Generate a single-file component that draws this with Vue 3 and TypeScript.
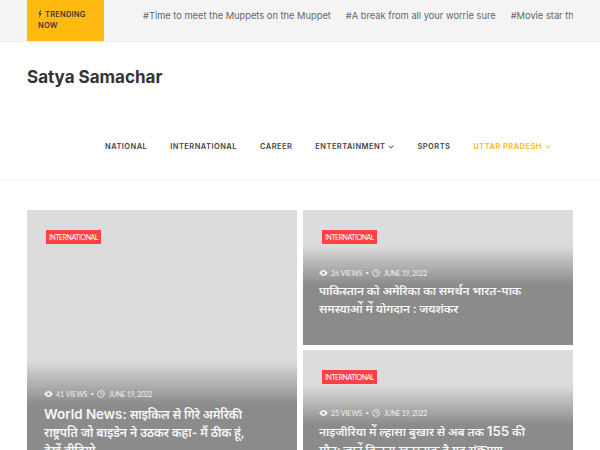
<script setup lang="ts">
interface Card { views: number; title: string }
const nav = [
  { label: 'NATIONAL' },
  { label: 'INTERNATIONAL' },
  { label: 'CAREER' },
  { label: 'ENTERTAINMENT', caret: true },
  { label: 'SPORTS' },
  { label: 'UTTAR PRADESH', caret: true, active: true },
]
const ticker = ['#Time to meet the Muppets on the Muppet', '#A break from all your worrie sure', '#Movie star the']
const main: Card = { views: 41, title: 'World News: साइकिल से गिरे अमेरिकी राष्ट्रपति जो बाइडेन ने उठकर कहा- मैं ठीक हूं, देखें वीडियो' }
const side: Card[] = [
  { views: 26, title: 'पाकिस्तान को अमेरिका का समर्थन भारत-पाक समस्याओं में योगदान : जयशंकर' },
  { views: 25, title: 'नाइजीरिया में ल्हासा बुखार से अब तक 155 की मौत; जानें कितना खतरनाक है यह संक्रमण' },
]
const parts = (title: string): string[] => title.split(/(World News:|155)/)
</script>

<template>
  <div class="page">
    <div class="topbar">
      <div class="trend">
        <svg class="bolt" width="4" height="8" viewBox="0 0 6 9" preserveAspectRatio="none"><path d="M3.600 0 .6 4.900h1.900L1.800 9 5.400 3.500H3.300L4.600 0z" fill="#3a3a3a"/></svg>
        TRENDING<br />NOW
      </div>
      <div class="ticker">
        <span v-for="t in ticker" :key="t">{{ t }}</span>
      </div>
    </div>

    <header class="brand">
      <h1>Satya Samachar</h1>
    </header>

    <nav class="nav">
      <a v-for="n in nav" :key="n.label" :class="{ active: n.active }">
        {{ n.label }}
        <svg v-if="n.caret" width="6" height="4" viewBox="0 0 6 4"><path d="M.6.7 3 3.100 5.400.7" fill="none" stroke="currentColor" stroke-width="1"/></svg>
      </a>
    </nav>

    <section class="grid">
      <article class="card big">
        <span class="tag">INTERNATIONAL</span>
        <div class="body">
          <div class="meta">
            <svg width="9" height="6" viewBox="0 0 10 7"><path d="M0 3.500C1.500 1 3.200 0 5 0s3.500 1 5 3.500C8.500 6 6.800 7 5 7S1.500 6 0 3.500z" fill="#f0f0f0"/><circle cx="5" cy="3.500" r="1.500" fill="#999"/></svg>
            <span>{{ main.views }} VIEWS</span>
            <i>•</i>
            <svg width="8" height="8" viewBox="0 0 9 9"><circle cx="4.500" cy="4.500" r="3.800" fill="none" stroke="#f0f0f0"/><path d="M4.500 2.300v2.400h1.800" fill="none" stroke="#f0f0f0" stroke-width=".9"/></svg>
            <span class="date">JUNE 19, 2022</span>
          </div>
          <h2><span v-for="(p, i) in parts(main.title)" :key="i" :class="{ lat: i % 2 === 1 }">{{ p }}</span></h2>
        </div>
      </article>
      <div class="col">
        <article v-for="c in side" :key="c.views" class="card small">
          <span class="tag">INTERNATIONAL</span>
          <div class="body">
            <div class="meta">
              <svg width="9" height="6" viewBox="0 0 10 7"><path d="M0 3.500C1.500 1 3.200 0 5 0s3.500 1 5 3.500C8.500 6 6.800 7 5 7S1.500 6 0 3.500z" fill="#f0f0f0"/><circle cx="5" cy="3.500" r="1.500" fill="#999"/></svg>
              <span>{{ c.views }} VIEWS</span>
              <i>•</i>
              <svg width="8" height="8" viewBox="0 0 9 9"><circle cx="4.500" cy="4.500" r="3.800" fill="none" stroke="#f0f0f0"/><path d="M4.500 2.300v2.400h1.800" fill="none" stroke="#f0f0f0" stroke-width=".9"/></svg>
              <span class="date">JUNE 19, 2022</span>
            </div>
            <h2><span v-for="(p, i) in parts(c.title)" :key="i" :class="{ lat: i % 2 === 1 }">{{ p }}</span></h2>
          </div>
        </article>
      </div>
    </section>
  </div>
</template>

<style>
html, body { margin: 0; overflow: hidden; background: #fff; }
</style>

<style scoped>
.page { width: 600px; height: 450px; overflow: hidden; font-family: Inter, "Noto Sans", sans-serif; }
.topbar {
  height: 41px; background: #f4f4f4; border-bottom: 1px solid #ececec;
  padding: 0 27px; display: flex;
}
.trend {
  width: 77px; flex: none; box-sizing: border-box; background: #ffb911;
  padding: 10px 0 0 11px; font-size: 7.500px; line-height: 10.500px; font-weight: 600;
  color: #3a3a3a; letter-spacing: .2px;
}
.bolt { margin-right: 1px; vertical-align: -1px; }
.ticker {
  flex: 1; min-width: 0; overflow: hidden; white-space: nowrap; display: flex; gap: 15px;
  padding-left: 39px; align-items: flex-start; padding-top: 9px;
  font-size: 9.300px; line-height: 14px; color: #666;
}
.brand { padding: 24px 27px 0; }
h1 { margin: 0; font-size: 17px; line-height: 22px; font-weight: 700; color: #333; }
.nav {
  margin-top: 45px; padding: 7px 0 0 105px; box-sizing: border-box;
  border-bottom: 1px solid #f5f5f5; height: 48px; white-space: nowrap;
  display: flex; gap: 23px; font-size: 7.500px; line-height: 14px;
  font-weight: 600; letter-spacing: .45px; color: #444;
}
.nav a { display: inline-flex; align-items: center; gap: 3px; height: 14px; }
.nav a.active { color: #ffb911; }
.grid { display: flex; gap: 6px; padding: 29px 27px 0; }
.col { width: 270px; display: flex; flex-direction: column; gap: 5px; }
.card { position: relative; width: 270px; box-sizing: border-box; flex: none; color: #fff; overflow: hidden; }
.big { height: 330px; background: linear-gradient(#dcdcdc 0, #dcdcdc 150px, #8b8b8b 195px, #8b8b8b 100%); padding: 20px 19px; }
.small { height: 135px; background: linear-gradient(#dcdcdc 0, #dcdcdc 35px, #8b8b8b 75px, #8b8b8b 100%); padding: 20px 19px 0 19px; }
.tag {
  display: inline-block; background: #ff4046; font: 400 7px/14px Lato, sans-serif; padding: 0 3px; color: #fff;
  vertical-align: top; letter-spacing: -.45px;
}
.body { position: absolute; left: 16px; width: 216px; top: 57px; }
.big .body { left: 17px; top: 178px; }
.meta { display: flex; align-items: center; gap: 3px; font: 400 7px/12px Lato, sans-serif; color: #eee; }
.meta i { font-style: normal; margin: 0; font-size: 6px; }
.date { letter-spacing: -.3px; margin-left: 1px; }
h2 { margin: 3px 0 0; font-size: 11.800px; line-height: 18px; font-weight: 600; color: #f6f6f6; font-family: Inter, "Noto Sans", sans-serif; letter-spacing: -.1px; }
.big h2 { margin-top: 5px; font-size: 12.200px; }
.lat { font-size: 13.400px; letter-spacing: 0; }
</style>
